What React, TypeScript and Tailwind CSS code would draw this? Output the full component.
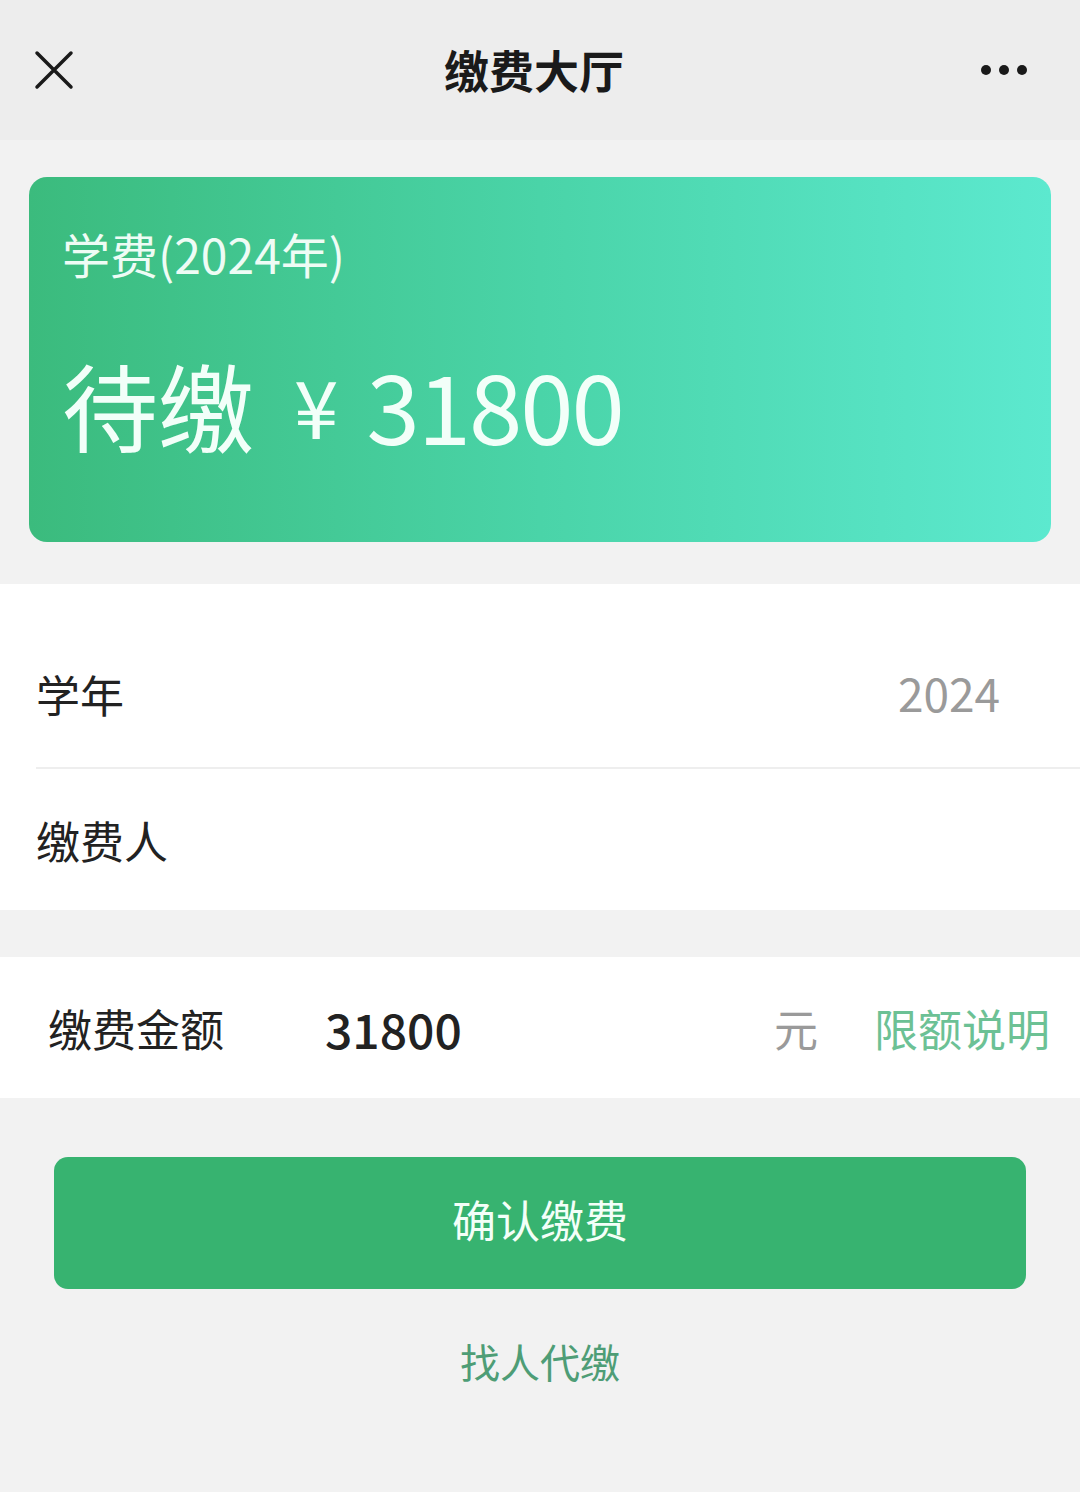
import React from 'react';

const font = { fontFamily: '"Noto Sans CJK SC", "Noto Sans", sans-serif' };

function CloseIcon() {
  return (
    <svg width="40" height="40" viewBox="0 0 40 40" fill="none">
      <path d="M3 3L37 37M37 3L3 37" stroke="#1a1a1a" strokeWidth="3.5" strokeLinecap="round" />
    </svg>
  );
}

function MoreIcon() {
  return (
    <svg width="48" height="12" viewBox="0 0 48 12" fill="#1a1a1a">
      <circle cx="6" cy="6" r="5" />
      <circle cx="24" cy="6" r="5" />
      <circle cx="42" cy="6" r="5" />
    </svg>
  );
}

export default function App() {
  return (
    <div className="w-[1080px] h-[1492px] bg-[#f2f2f2] flex flex-col" style={font}>
      <header className="h-[140px] bg-[#ededed] flex items-center justify-between pl-[34px] pr-[52px] relative">
        <CloseIcon />
        <h1 className="absolute left-0 right-[12px] text-center text-[45px] font-bold text-[#1a1a1a] pointer-events-none">
          缴费大厅
        </h1>
        <MoreIcon />
      </header>

      <div className="px-[29px] pt-[37px] pb-[42px]">
        <div className="h-[365px] rounded-[18px] bg-gradient-to-r from-[#3bbb7d] via-[#4ad4a8] to-[#5ce9cf] px-[33px] pt-[44px] flex flex-col">
          <div className="text-[48px] leading-[64px] text-[#eefcf5]">学费(2024年)</div>
          <div className="mt-[64px] text-[96px] leading-[110px] text-[#f2fff9] flex items-center">
            <span>待缴</span>
            <span className="ml-[40px] text-[80px]">¥</span>
            <span className="ml-[28px] tracking-[-2px]">31800</span>
          </div>
        </div>
      </div>

      <section className="bg-white">
        <div className="h-[183px] flex items-end pb-[40px] pl-[36px] pr-[80px] justify-between">
          <span className="text-[44px] text-[#222]">学年</span>
          <span className="text-[46px] text-[#9a9a9a]">2024</span>
        </div>
        <div className="ml-[36px] h-[2px] bg-[#eeeeee]"></div>
        <div className="h-[141px] flex items-center pl-[36px]">
          <span className="text-[44px] text-[#222]">缴费人</span>
        </div>
      </section>

      <section className="bg-white mt-[47px] h-[141px] flex items-center pl-[48px] pr-[30px]">
        <span className="text-[44px] text-[#222] w-[277px]">缴费金额</span>
        <span className="text-[48px] font-medium text-[#222]">31800</span>
        <span className="ml-auto text-[44px] text-[#9a9a9a]">元</span>
        <span className="ml-[56px] text-[44px] text-[#6cc195]">限额说明</span>
      </section>

      <div className="px-[54px] pt-[59px]">
        <button className="w-full h-[132px] rounded-[14px] bg-[#37b370] text-[44px] leading-[60px] pb-[8px] text-[#f3fff8]">
          确认缴费
        </button>
      </div>

      <div className="mt-[42px] text-center text-[40px] text-[#4e9d76]">找人代缴</div>
    </div>
  );
}
